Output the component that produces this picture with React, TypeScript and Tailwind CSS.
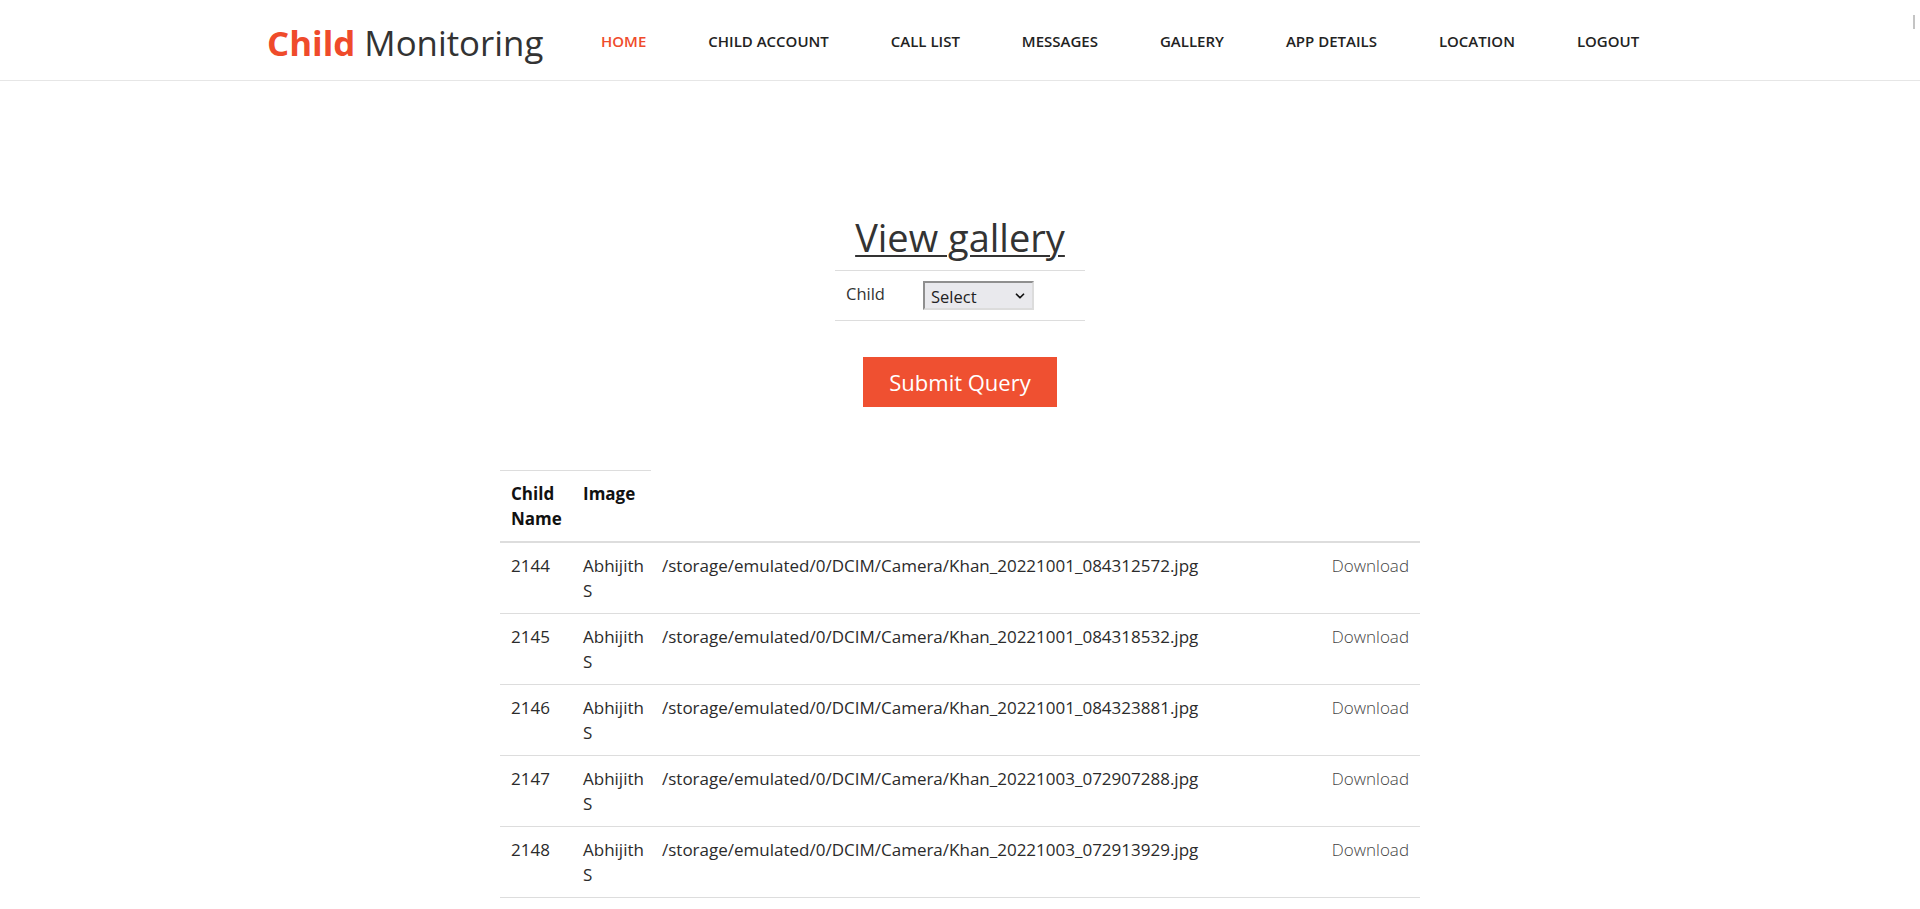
import { ChevronDown } from 'lucide-react'

const navItems = [
  { name: 'HOME', active: true },
  { name: 'CHILD ACCOUNT' },
  { name: 'CALL LIST' },
  { name: 'MESSAGES' },
  { name: 'GALLERY' },
  { name: 'APP DETAILS' },
  { name: 'LOCATION' },
  { name: 'LOGOUT' },
]

const rows = [
  { id: 2144, name: 'Abhijith S', path: '/storage/emulated/0/DCIM/Camera/Khan_20221001_084312572.jpg' },
  { id: 2145, name: 'Abhijith S', path: '/storage/emulated/0/DCIM/Camera/Khan_20221001_084318532.jpg' },
  { id: 2146, name: 'Abhijith S', path: '/storage/emulated/0/DCIM/Camera/Khan_20221001_084323881.jpg' },
  { id: 2147, name: 'Abhijith S', path: '/storage/emulated/0/DCIM/Camera/Khan_20221003_072907288.jpg' },
  { id: 2148, name: 'Abhijith S', path: '/storage/emulated/0/DCIM/Camera/Khan_20221003_072913929.jpg' },
]

function Header() {
  return (
    <header className="relative h-[81px] border-b border-[#e6e6e6] bg-white">
      <div className="flex h-full items-center pl-[267px]">
        {/* Logo */}
        <div className="w-[303px] pt-[7px] text-[34.8px] leading-none text-[#333]">
          <span className="font-bold text-[#ef4b2b]">Child</span> Monitoring
        </div>

        {/* Nav */}
        <nav className="flex items-center pt-[2px]">
          {navItems.map((item) => (
            <a
              key={item.name}
              href="#"
              className={
                'px-[31px] text-[15px] font-semibold ' +
                (item.active ? 'text-[#ef4b2b]' : 'text-[#222]')
              }
            >
              {item.name}
            </a>
          ))}
        </nav>
      </div>
      <div className="absolute right-[5px] top-[15px] h-[14px] w-[2px] bg-[#c4c4c4]" />
    </header>
  )
}

function QueryForm() {
  return (
    <div className="flex flex-col items-center">
      <h2 className="mt-[130px] text-[38px] leading-[52px] text-[#333] underline decoration-[1.5px] underline-offset-[3px]">
        View gallery
      </h2>
      <div className="mt-[7px] flex w-[250px] border-y border-[#ddd] py-[10px] text-[16.5px] leading-[25px] text-[#333]">
        <div className="w-[88px] pl-[11px]">Child</div>
        <div className="flex h-[29px] w-[111px] items-center justify-between border-2 border-t-[#8f8f8f] border-l-[#8f8f8f] border-r-[#dcdcdc] border-b-[#dcdcdc] bg-[#e9e9ed] pl-[6px] pr-[5px] text-[#222]">
          <span className="pt-[2px]">Select</span>
          <ChevronDown className="h-[14px] w-[14px] text-[#111]" strokeWidth={3} />
        </div>
      </div>
      <button className="mt-[36px] h-[50px] w-[194px] bg-[#ef5031] text-[22px] text-white">
        Submit Query
      </button>
    </div>
  )
}

function GalleryTable() {
  return (
    <table className="mx-auto mt-[63px] w-[920px] table-fixed border-collapse text-[17px] leading-[25px] text-[#2b2b2b]">
      <colgroup>
        <col className="w-[72px]" />
        <col className="w-[79px]" />
        <col />
        <col className="w-[100px]" />
      </colgroup>
      <thead>
        <tr>
          <th className="border-t border-[#ddd] px-[11px] py-[10px] text-left align-top font-bold text-[#111]">
            Child Name
          </th>
          <th className="border-t border-[#ddd] px-[11px] py-[10px] text-left align-top font-bold text-[#111]">
            Image
          </th>
        </tr>
      </thead>
      <tbody>
        {rows.map((row, i) => (
          <tr
            key={row.id}
            className={i === 0 ? 'border-t-2 border-b border-[#ddd]' : 'border-b border-[#ddd]'}
          >
            <td className="px-[11px] py-[10px] align-top">{row.id}</td>
            <td className="px-[11px] py-[10px] align-top">{row.name}</td>
            <td className="px-[11px] py-[10px] align-top">{row.path}</td>
            <td className="px-[11px] py-[10px] text-right align-top font-light text-[#444]">
              Download
            </td>
          </tr>
        ))}
      </tbody>
    </table>
  )
}

export default function App() {
  return (
    <div className="min-h-screen overflow-hidden bg-white font-['Open_Sans',sans-serif]">
      <Header />
      <QueryForm />
      <GalleryTable />
    </div>
  )
}
